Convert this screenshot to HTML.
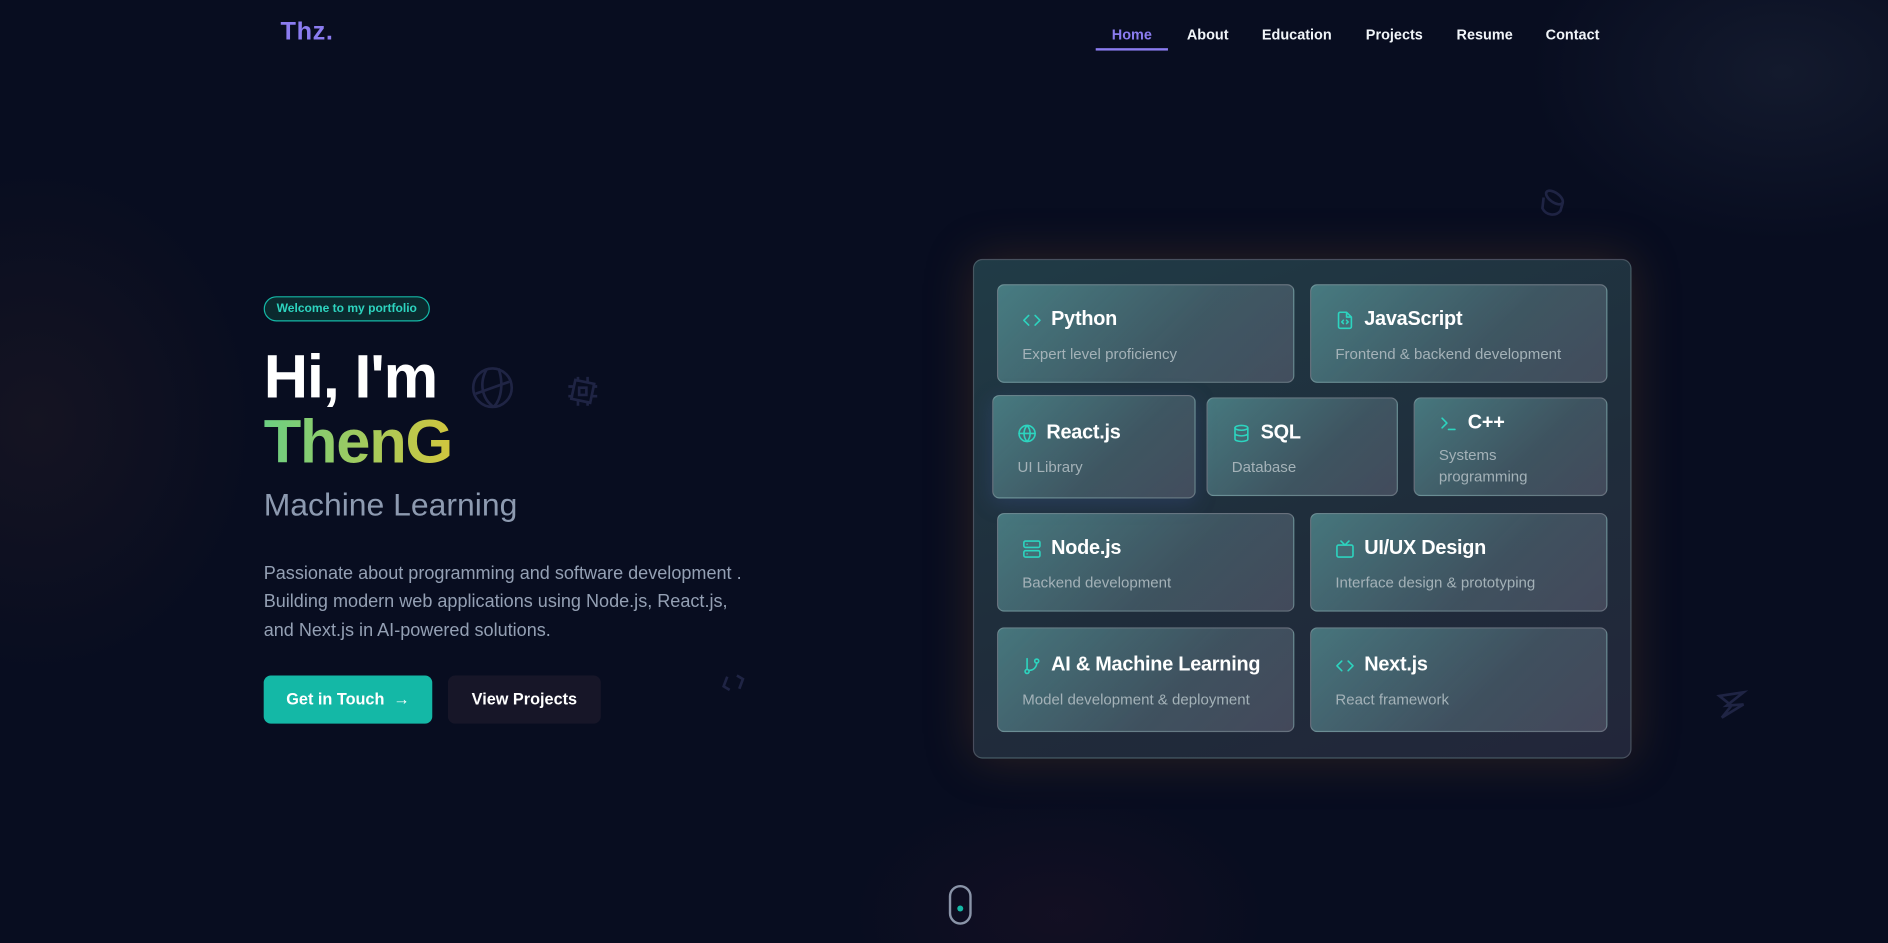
<!DOCTYPE html>
<html><head><meta charset="utf-8"><style>
*{margin:0;padding:0;box-sizing:border-box}
html,body{width:1888px;height:943px;overflow:hidden;background:#080d20}
#w{position:absolute;left:0;top:0;width:1568px;height:783px;transform:scale(1.20408);transform-origin:0 0;font-family:"Liberation Sans",sans-serif;
background:radial-gradient(ellipse 260px 300px at 30px 350px,rgba(60,40,40,.25),transparent 70%),radial-gradient(ellipse 300px 200px at 1480px 60px,rgba(40,50,70,.35),transparent 70%),radial-gradient(ellipse 250px 150px at 880px 760px,rgba(40,20,40,.35),transparent 70%),#080d20;overflow:hidden}
.a{position:absolute}
.logo{left:233px;top:15px;font-size:21px;font-weight:700;color:#8b7cf0;letter-spacing:.5px}
.nav a{position:absolute;top:22px;font-size:12px;font-weight:700;color:#f1f5f9;text-decoration:none;transform:translateX(-50%);white-space:nowrap}
.badge{left:219px;top:246px;width:138px;height:21px;border:1px solid #14b8a6;border-radius:11px;background:#0b2a2e;color:#2dd4bf;font-size:10px;font-weight:700;text-align:center;line-height:19px}
.h1{left:219px;top:286px;font-size:51px;font-weight:700;color:#fff;letter-spacing:-1px;line-height:54px}
.h2{background:linear-gradient(90deg,#6ccf82,#d2c63d);-webkit-background-clip:text;background-clip:text;color:transparent}
.ml{left:219px;top:404px;font-size:26.5px;color:#8d9ab0}
.p{left:219px;top:465px;font-size:15px;line-height:23.3px;color:#94a0b4;width:412px}
.btn{top:561px;height:40px;border-radius:6px;font-size:13.5px;font-weight:700;color:#fff;line-height:40px;text-align:center}
.panel{left:808px;top:215px;width:547px;height:415px;border-radius:8px;border:1px solid rgba(255,255,255,.18);
background:linear-gradient(160deg,#203b46 0%,#1f2d3b 55%,#22263a 100%);box-shadow:0 0 40px rgba(140,90,40,.28)}
.c{position:absolute;border-radius:6px;border:1px solid rgba(255,255,255,.2);background:linear-gradient(135deg,rgba(110,190,190,.5),rgba(110,140,150,.4) 60%,rgba(120,120,140,.4))}
.c .t{position:absolute;left:20px;top:19px;font-size:16.5px;font-weight:700;color:#fff;display:flex;align-items:center;gap:8px;white-space:nowrap;letter-spacing:-.2px}
.c .d{position:absolute;left:20px;top:48px;font-size:12.5px;color:#a4b2b8;line-height:18px}
.c svg{width:16px;height:16px;fill:none;stroke:#2dd4bf;stroke-width:2;stroke-linecap:round;stroke-linejoin:round}
.f{position:absolute;fill:none;stroke:#1f2444;stroke-width:2.2}
</style></head><body><div id="w">
<div class="a logo">Thz.</div>
<div class="nav">
<a style="left:940px;color:#8b7cf0">Home</a>
<div class="a" style="left:910px;top:40px;width:60px;height:2px;background:#8b7cf0"></div>
<a style="left:1003px">About</a><a style="left:1077px">Education</a><a style="left:1158px">Projects</a><a style="left:1233px">Resume</a><a style="left:1306px">Contact</a>
</div>
<div class="a badge">Welcome to my portfolio</div>
<div class="a h1">Hi, I'm<br><span class="h2">ThenG</span></div>
<div class="a ml">Machine Learning</div>
<div class="a p">Passionate about programming and software development . Building modern web applications using Node.js, React.js, and Next.js in AI-powered solutions.</div>
<div class="a btn" style="left:219px;width:140px;background:#14b8a6">Get in Touch &nbsp;→</div>
<div class="a btn" style="left:372px;width:127px;background:#171628">View Projects</div>

<svg class="f" style="left:390px;top:303px" width="38" height="38" viewBox="0 0 38 38"><circle cx="19" cy="19" r="16"/><path d="M5 24 L33 14 M14 4 C8 15 10 28 20 35 M24 3 C28 14 27 28 20 35"/></svg>
<svg class="f" style="left:470px;top:311px" width="28" height="28" viewBox="0 0 28 28"><rect x="6" y="6" width="16" height="16" transform="rotate(12 14 14)"/><rect x="11" y="11" width="6" height="6"/><path d="M10 2v4M18 2v4M10 22v4M18 22v4M2 10h4M2 18h4M22 10h4M22 18h4"/></svg>
<svg class="f" style="left:1276px;top:155px" width="28" height="28" viewBox="0 0 28 28"><ellipse cx="15" cy="9" rx="8" ry="4" transform="rotate(35 15 9)"/><path d="M6 9 L5 18 C8 24 16 25 20 20 L22 13"/></svg>
<svg class="f" style="left:1424px;top:572px" width="28" height="28" viewBox="0 0 28 28"><path d="M4 6 L24 3 L10 14 L24 13 L6 24 L14 14 Z"/></svg>
<svg class="f" style="left:598px;top:558px" width="22" height="20" viewBox="0 0 22 20"><path d="M6 4 L3 12 L8 15 M14 3 L19 6 L16 14"/></svg>

<div class="a panel"></div>
<div class="c" style="left:828px;top:236px;width:247px;height:82px"><div class="t"><svg viewBox="0 0 24 24"><path d="M8 6l-6 6 6 6M16 6l6 6-6 6"/></svg>Python</div><div class="d">Expert level proficiency</div></div>
<div class="c" style="left:1088px;top:236px;width:247px;height:82px"><div class="t"><svg viewBox="0 0 24 24"><path d="M14 2H6a2 2 0 0 0-2 2v16a2 2 0 0 0 2 2h12a2 2 0 0 0 2-2V8z M14 2v6h6 M10 12l-2 2 2 2M14 12l2 2-2 2"/></svg>JavaScript</div><div class="d">Frontend &amp; backend development</div></div>
<div class="c" style="left:824px;top:328px;width:169px;height:86px;box-shadow:0 4px 16px rgba(60,80,140,.35)"><div class="t" style="top:21px"><svg viewBox="0 0 24 24"><circle cx="12" cy="12" r="10"/><path d="M2 12h20M12 2a15 15 0 0 1 0 20M12 2a15 15 0 0 0 0 20"/></svg>React.js</div><div class="d" style="top:50px">UI Library</div></div>
<div class="c" style="left:1002px;top:330px;width:159px;height:82px"><div class="t"><svg viewBox="0 0 24 24"><ellipse cx="12" cy="5" rx="8" ry="3"/><path d="M4 5v14c0 1.7 3.6 3 8 3s8-1.3 8-3V5M4 12c0 1.7 3.6 3 8 3s8-1.3 8-3"/></svg>SQL</div><div class="d">Database</div></div>
<div class="c" style="left:1174px;top:330px;width:161px;height:82px"><div class="t" style="top:11px"><svg viewBox="0 0 24 24"><path d="M4 17l6-6-6-6M12 19h8"/></svg>C++</div><div class="d" style="top:38px">Systems<br>programming</div></div>
<div class="c" style="left:828px;top:426px;width:247px;height:82px"><div class="t"><svg viewBox="0 0 24 24"><rect x="2" y="2" width="20" height="8" rx="2"/><rect x="2" y="14" width="20" height="8" rx="2"/><path d="M6 6h.01M6 18h.01"/></svg>Node.js</div><div class="d">Backend development</div></div>
<div class="c" style="left:1088px;top:426px;width:247px;height:82px"><div class="t"><svg viewBox="0 0 24 24"><rect x="2" y="7" width="20" height="15" rx="2"/><path d="M17 2l-5 5-5-5"/></svg>UI/UX Design</div><div class="d">Interface design &amp; prototyping</div></div>
<div class="c" style="left:828px;top:521px;width:247px;height:87px"><div class="t" style="top:21px"><svg viewBox="0 0 24 24"><circle cx="6" cy="19" r="2.5"/><circle cx="18" cy="6" r="2.5"/><path d="M6 3v13.5M18 8.5a9 9 0 0 1-9 9"/></svg>AI &amp; Machine Learning</div><div class="d" style="top:50px">Model development &amp; deployment</div></div>
<div class="c" style="left:1088px;top:521px;width:247px;height:87px"><div class="t" style="top:21px"><svg viewBox="0 0 24 24"><path d="M8 6l-6 6 6 6M16 6l6 6-6 6"/></svg>Next.js</div><div class="d" style="top:50px">React framework</div></div>

<div class="a" style="left:788px;top:735px;width:19px;height:33px;border:2px solid #8a94a8;border-radius:10px"></div>
<div class="a" style="left:795px;top:752px;width:5px;height:5px;border-radius:50%;background:#14b8a6"></div>
</div></body></html>
